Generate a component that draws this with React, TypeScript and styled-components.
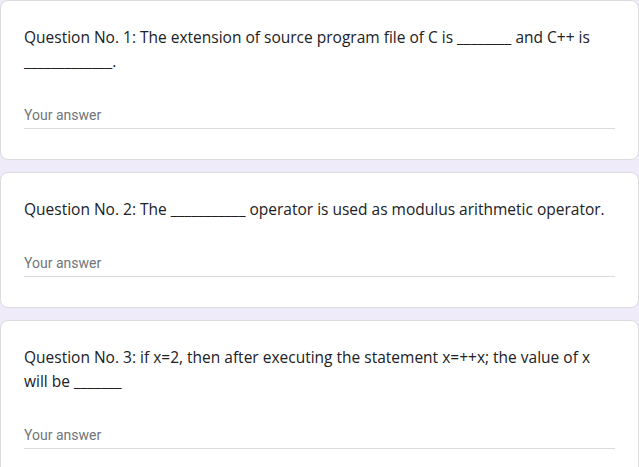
import React from "react";
import styled, { createGlobalStyle } from "styled-components";

const Global = createGlobalStyle`
  html, body { margin: 0; padding: 0; background: #efebf8; }
  body { width: 639px; height: 467px; overflow: hidden; }
`;

const Page = styled.div`
  display: flex;
  flex-direction: column;
  gap: 12px;
  width: 639px;
`;

const Card = styled.section`
  background: #ffffff;
  border: 1px solid #dadce0;
  border-radius: 8px;
  padding: 24px 23px 30px;
  box-sizing: border-box;
  width: 639px;
`;

const Title = styled.div`
  font-family: "Open Sans", "Liberation Sans", sans-serif;
  font-size: 15.5px;
  line-height: 24px;
  color: #202124;
  white-space: pre-wrap;
`;

const AnswerField = styled.div`
  margin-top: 28px;
  height: 27px;
  display: flex;
  align-items: center;
  border-bottom: 1px solid #dadce0;
  font-family: Roboto, "Liberation Sans", sans-serif;
  font-size: 14px;
  color: #70757a;
`;

const questions = [
  "Question No. 1: The extension of source program file of C is ________ and C++ is\n_____________.",
  "Question No. 2: The ___________ operator is used as modulus arithmetic operator.",
  "Question No. 3: if x=2, then after executing the statement x=++x; the value of x\nwill be _______",
];

export default function App() {
  return (
    <>
      <Global />
      <Page>
        {questions.map((q, i) => (
          <Card key={i}>
            <Title>{q}</Title>
            <AnswerField>Your answer</AnswerField>
          </Card>
        ))}
      </Page>
    </>
  );
}
